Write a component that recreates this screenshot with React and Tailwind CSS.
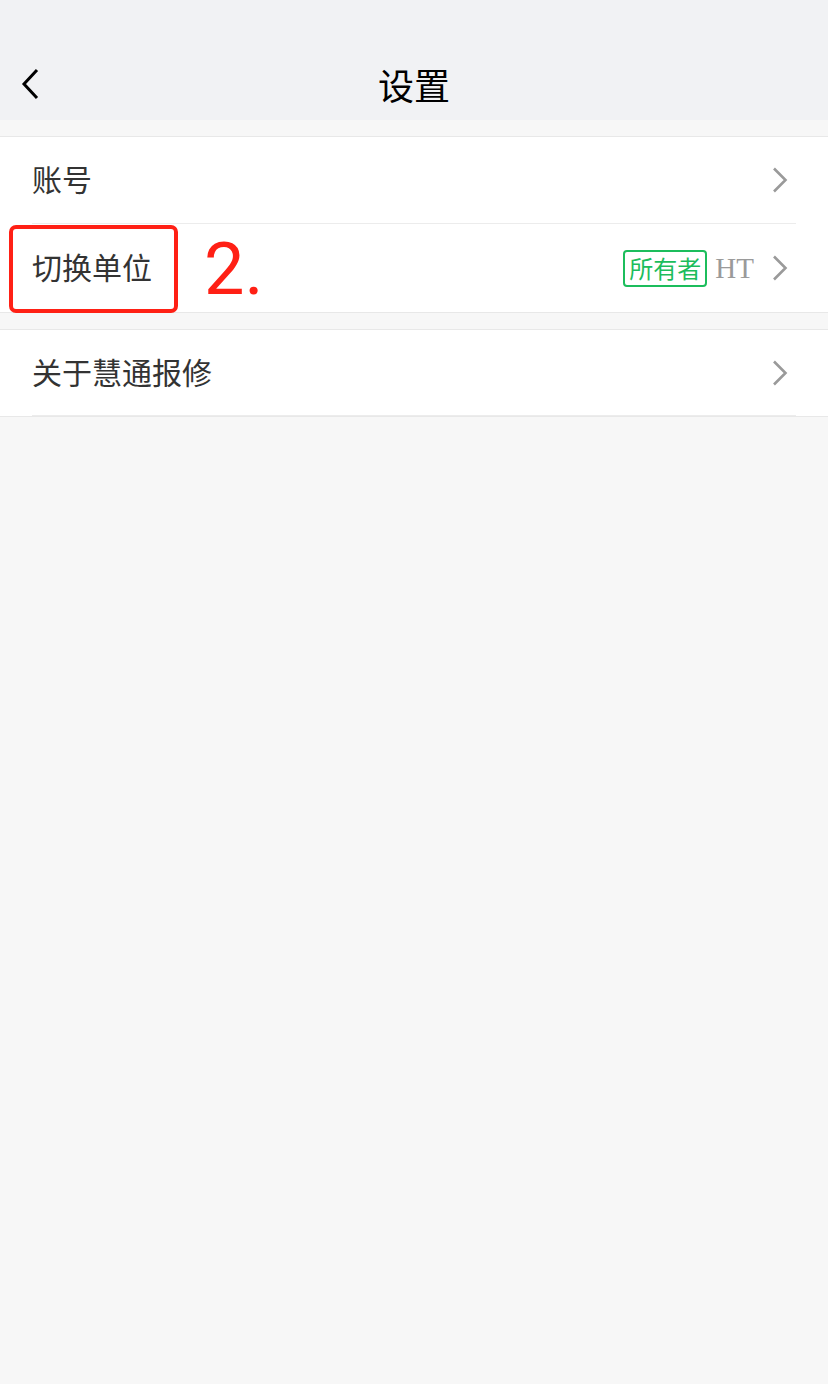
import React from "react";

const Chevron = () => (
  <svg width="16" height="26" viewBox="0 0 16 26" className="shrink-0">
    <path d="M2 1.5 L13.5 13 L2 24.5" fill="none" stroke="#9a9a9a" strokeWidth="2.6" />
  </svg>
);

export default function App() {
  const font = { fontFamily: '"Noto Sans CJK SC", "Noto Sans", sans-serif' };
  return (
    <div className="min-h-[1384px] w-[828px] bg-[#f7f7f7]" style={font}>
      <div className="h-[120px] bg-[#f1f2f4] pt-[48px]">
        <div className="relative flex h-[72px] items-center justify-center">
          <svg width="20" height="32" viewBox="0 0 20 32" className="absolute left-[20px] top-[20px]">
            <path d="M17 2 L4 16 L17 30" fill="none" stroke="#000" strokeWidth="3" />
          </svg>
          <span className="text-[36px] leading-none text-black">设置</span>
        </div>
      </div>

      <div className="mt-[16px] border-y border-[#e8e8e8] bg-white">
        <div className="flex h-[86px] items-center justify-between pl-[32px] pr-[40px]">
          <span className="mb-[4px] text-[30px] leading-none text-[#333]">账号</span>
          <Chevron />
        </div>
        <div className="mx-[32px] h-px bg-[#ececec]" />
        <div className="relative flex h-[88px] items-center justify-between pl-[32px] pr-[40px]">
          <span className="mb-[4px] text-[30px] leading-none text-[#333]">切换单位</span>
          <div className="flex items-center">
            <span className="flex h-[37px] items-center rounded-[4px] border-2 border-[#1cbd5c] px-[4px] text-[24px] leading-none text-[#1cbd5c]">
              所有者
            </span>
            <span
              className="ml-[8px] mr-[18px] text-[29px] leading-none text-[#9a9a9a]"
              style={{ fontFamily: '"Liberation Serif", serif' }}
            >
              HT
            </span>
            <Chevron />
          </div>
          <div className="absolute left-[9px] top-[1px] h-[88px] w-[169px] rounded-[7px] border-[4px] border-[#ff2015]" />
          <span
            className="absolute left-[204px] top-[10px] text-[72px] leading-none text-[#ff2015]"
            style={{ fontFamily: 'Roboto, sans-serif' }}
          >
            2.
          </span>
        </div>
      </div>

      <div className="mt-[16px] border-y border-[#e8e8e8] bg-white">
        <div className="flex h-[85px] items-center justify-between pl-[32px] pr-[40px]">
          <span className="mb-[4px] text-[30px] leading-none text-[#333]">关于慧通报修</span>
          <Chevron />
        </div>
        <div className="ml-[32px] mr-[32px] h-px bg-[#ececec]" />
      </div>
    </div>
  );
}
